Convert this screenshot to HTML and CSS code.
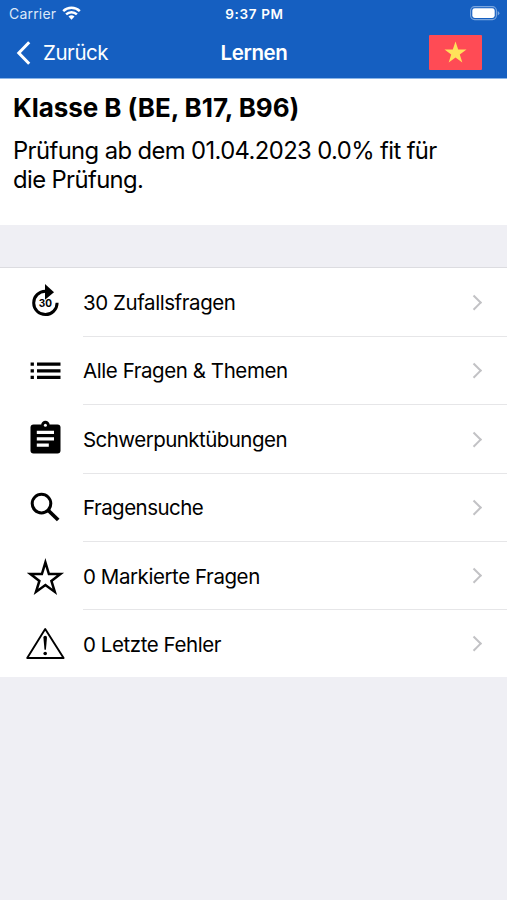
FILE: index.html
```
<!DOCTYPE html>
<html lang="de">

<head>
    <meta charset="UTF-8">
    <meta name="viewport" content="width=device-width, initial-scale=1.0">
    <title>Lernen</title>
    <link rel="stylesheet" href="styles.css">
</head>

<body>
    <header class="header">
        <div class="status">
            <div class="carrier">
                <span>Carrier</span>
                <svg class="wifi" width="19" height="14" viewBox="0 0 19 14">
                    <path d="M1.2 5.2a12 12 0 0 1 16.6 0M4.1 8.4a7.8 7.8 0 0 1 10.8 0" fill="none" stroke="#fff" stroke-width="2.5" />
                    <path d="M9.5 13.8l-3-3.2a4.3 4.3 0 0 1 6 0z" fill="#fff" />
                </svg>
            </div>
            <span class="time">9:37 PM</span>
            <svg class="battery" width="30" height="15" viewBox="0 0 30 15">
                <rect x=".6" y=".6" width="25.8" height="13" rx="4" fill="none" stroke="#7ba6de" stroke-width="1.1" />
                <rect x="2.3" y="2.3" width="22.4" height="9.6" rx="2.4" fill="#fff" />
                <path d="M27.7 5v4.4q1.7-.8 1.7-2.2t-1.7-2.2z" fill="#7ba6de" />
            </svg>
        </div>
        <nav class="navbar">
            <a class="back">
                <svg width="15" height="24" viewBox="0 0 15 24">
                    <path d="M13.2 1.2L2.8 12l10.4 10.8" fill="none" stroke="#fff" stroke-width="3" />
                </svg>
                <span>Zurück</span>
            </a>
            <h1 class="title">Lernen</h1>
            <svg class="flag" width="53" height="35" viewBox="0 0 53 35">
                <rect width="53" height="35" rx="1" fill="#ff4b55" />
                <path d="M26.5 6.5l2.7 7.9 8.3.1-6.7 5 2.5 8-6.8-4.9-6.8 4.9 2.5-8-6.7-5 8.3-.1z" fill="#ffe15a" />
            </svg>
        </nav>
    </header>

    <section class="info">
        <h2>Klasse B (BE, B17, B96)</h2>
        <p>Prüfung ab dem 01.04.2023 0.0% fit für<br>die Prüfung.</p>
    </section>

    <ul class="menu">
        <li class="item">
            <svg class="icon" viewBox="0 0 40 40">
                <path d="M32.1 20.8A11.7 11.7 0 1 1 20.4 9.2" fill="none" stroke="#000" stroke-width="3" />
                <path d="M20 2l9 8.2-9 7.6z" />
                <text class="num" x="20.4" y="24.8">30</text>
            </svg>
            <div class="row"><span class="label">30 Zufallsfragen</span><i class="chevron"></i></div>
        </li>
        <li class="item">
            <svg class="icon" viewBox="0 0 40 40">
                <path d="M12 13.2h23.5M12 19.8h23.5M12 26.3h23.5M5.6 13.2h3.3M5.6 19.8h3.3M5.6 26.3h3.3" stroke="#000" stroke-width="3.3" />
            </svg>
            <div class="row"><span class="label">Alle Fragen &amp; Themen</span><i class="chevron"></i></div>
        </li>
        <li class="item">
            <svg class="icon" viewBox="0 0 40 40">
                <rect x="5.5" y="5.4" width="30" height="29.2" rx="3" />
                <circle cx="20.4" cy="6" r="4.2" />
                <circle cx="20.4" cy="6.3" r="1.5" fill="#fff" />
                <path d="M11.8 13.4h17.2M11.8 19.8h17.2M11.8 26.2h12" stroke="#fff" stroke-width="3.3" />
            </svg>
            <div class="row"><span class="label tight">Schwerpunktübungen</span><i class="chevron"></i></div>
        </li>
        <li class="item">
            <svg class="icon" viewBox="0 0 40 40">
                <circle cx="16.5" cy="15.6" r="9.3" fill="none" stroke="#000" stroke-width="3" />
                <path d="M23.4 22.5l9.8 9.5" stroke="#000" stroke-width="3.8" />
            </svg>
            <div class="row"><span class="label tight">Fragensuche</span><i class="chevron"></i></div>
        </li>
        <li class="item">
            <svg class="icon" viewBox="0 0 40 40">
                <path d="M20.4 6.4l3.5 11.6h11.5l-9 6.9 3.4 11-9.4-6.8-9.4 6.8 3.4-11-9-6.9h11.5z" fill="none" stroke="#000" stroke-width="2.5" />
            </svg>
            <div class="row"><span class="label">0 Markierte Fragen</span><i class="chevron"></i></div>
        </li>
        <li class="item">
            <svg class="icon" viewBox="0 0 40 40">
                <path d="M20.2 5L2.2 34h36.4z" fill="none" stroke="#000" stroke-width="1.9" stroke-linejoin="round" />
                <path d="M18.4 13.6q0-1.8 1.8-1.8t1.8 1.8l-1.1 12.2h-1.4z" />
                <circle cx="20.2" cy="29.5" r="1.8" />
            </svg>
            <div class="row"><span class="label">0 Letzte Fehler</span><i class="chevron"></i></div>
        </li>
    </ul>
</body>

</html>
```
FILE: styles.css
```
* {
    box-sizing: border-box;
}

body {
    margin: 0;
    min-height: 900px;
    background: #efeff4;
    font-family: Inter, "Liberation Sans", sans-serif;
    color: #000;
}

.header {
    height: 79px;
    background: #155fc1;
    border-bottom: 1px solid #8ab5e8;
    color: #fff;
}

.status {
    display: grid;
    grid-template-columns: 1fr auto 1fr;
    align-items: center;
    height: 27px;
    padding: 0 7px 0 9px;
    font-size: 14px;
}

.carrier {
    display: flex;
    align-items: center;
    gap: 6px;
    color: #dce8f8;
    letter-spacing: 0.2px;
}

.wifi {
    margin-top: -2px;
}

.time {
    font-size: 13.5px;
    font-weight: 600;
    letter-spacing: 0.65px;
}

.battery {
    justify-self: end;
}

.navbar {
    display: grid;
    grid-template-columns: 1fr auto 1fr;
    align-items: center;
    height: 51px;
    padding: 0 25px 0 16px;
}

.back {
    display: flex;
    align-items: center;
    gap: 12px;
    font-size: 20.5px;
    letter-spacing: -0.45px;
}

.title {
    margin: 0 0 0 10px;
    font-size: 20.5px;
    font-weight: 600;
    letter-spacing: -0.4px;
}

.flag {
    justify-self: end;
}

.info {
    height: 146px;
    padding: 13px 13px 0;
    background: #fff;
}

.info h2 {
    margin: 0;
    font-size: 26px;
    line-height: 32px;
    font-weight: 700;
    letter-spacing: -0.05px;
}

.info p {
    margin: 12px 0 0;
    font-size: 23.8px;
    line-height: 29px;
    letter-spacing: -0.6px;
}

.menu {
    margin: 42px 0 0;
    padding: 0;
    list-style: none;
    background: #fff;
    border-top: 1px solid #dcdce0;
}

.item {
    display: flex;
    align-items: center;
    height: 68.4px;
    padding-left: 24.5px;
}

.item:first-child {
    height: 68.8px;
}

.item:last-child {
    height: 66.6px;
}

.icon {
    width: 40px;
    height: 40px;
}

.num {
    font-size: 10px;
    font-weight: 700;
    text-anchor: middle;
}

.row {
    display: flex;
    flex: 1;
    align-items: center;
    justify-content: space-between;
    height: 100%;
    margin-left: 18.5px;
    padding-right: 28px;
    border-bottom: 1px solid #e6e6e8;
    font-size: 20.5px;
}

.item:last-child .row {
    border-bottom: none;
}

.label {
    padding-top: 1px;
    letter-spacing: -0.43px;
}

.tight {
    letter-spacing: -0.54px;
}

.chevron {
    width: 10.5px;
    height: 10.5px;
    border-top: 2px solid #c2c2c5;
    border-right: 2px solid #c2c2c5;
    transform: rotate(45deg);
}
```
